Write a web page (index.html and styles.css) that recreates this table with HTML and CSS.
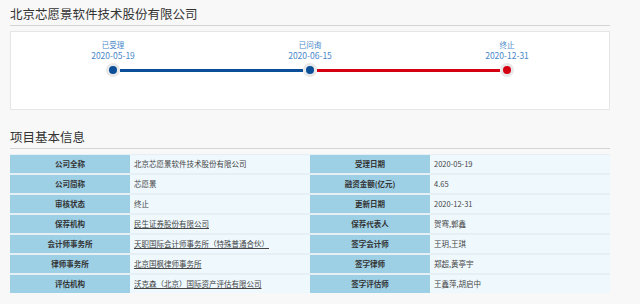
FILE: index.html
```html
<!DOCTYPE html>
<html lang="zh">
<head>
    <meta charset="UTF-8">
    <title>北京芯愿景软件技术股份有限公司</title>
    <link rel="stylesheet" href="styles.css">
</head>
<body>
    <div class="page">
        <!-- 公司名称 -->
        <h2 class="section-title">北京芯愿景软件技术股份有限公司</h2>

        <!-- 进度 -->
        <div class="progress-card">
            <div class="timeline">
                <div class="step">
                    <div class="step-name">已受理</div>
                    <div class="step-date">2020-05-19</div>
                </div>
                <div class="step">
                    <div class="step-name">已问询</div>
                    <div class="step-date">2020-06-15</div>
                </div>
                <div class="step">
                    <div class="step-name">终止</div>
                    <div class="step-date">2020-12-31</div>
                </div>
            </div>
            <div class="track">
                <span class="dot blue"></span>
                <span class="line blue"></span>
                <span class="dot blue"></span>
                <span class="line red"></span>
                <span class="dot red"></span>
            </div>
        </div>

        <!-- 项目基本信息 -->
        <h2 class="section-title second">项目基本信息</h2>
        <table class="info-table">
            <tr>
                <td class="label">公司全称</td>
                <td class="value">北京芯愿景软件技术股份有限公司</td>
                <td class="label">受理日期</td>
                <td class="value">2020-05-19</td>
            </tr>
            <tr>
                <td class="label">公司简称</td>
                <td class="value">芯愿景</td>
                <td class="label">融资金额(亿元)</td>
                <td class="value">4.65</td>
            </tr>
            <tr>
                <td class="label">审核状态</td>
                <td class="value">终止</td>
                <td class="label">更新日期</td>
                <td class="value">2020-12-31</td>
            </tr>
            <tr>
                <td class="label">保荐机构</td>
                <td class="value"><a href="#">民生证券股份有限公司</a></td>
                <td class="label">保荐代表人</td>
                <td class="value">贺骞,郭鑫</td>
            </tr>
            <tr>
                <td class="label">会计师事务所</td>
                <td class="value"><a href="#">天职国际会计师事务所（特殊普通合伙）</a></td>
                <td class="label">签字会计师</td>
                <td class="value">王玥,王琪</td>
            </tr>
            <tr>
                <td class="label">律师事务所</td>
                <td class="value"><a href="#">北京国枫律师事务所</a></td>
                <td class="label">签字律师</td>
                <td class="value">郑超,黄亭宇</td>
            </tr>
            <tr>
                <td class="label">评估机构</td>
                <td class="value"><a href="#">沃克森（北京）国际资产评估有限公司</a></td>
                <td class="label">签字评估师</td>
                <td class="value">王鑫萍,胡启中</td>
            </tr>
        </table>
    </div>
</body>
</html>
```

FILE: styles.css
```css
body {
    margin: 0;
    background-color: #f8f8f8;
    font-family: "Noto Sans CJK SC", "Noto Sans", sans-serif;
    color: #333;
}

.page {
    width: 600px;
    padding: 4px 30px 0 10px;
}

/* 标题 */
.section-title {
    margin: 0;
    font-size: 12.5px;
    font-weight: normal;
    line-height: 20px;
    color: #333;
    padding-bottom: 1px;
    border-bottom: 1px solid #d4d4d4;
}

.section-title.second {
    margin-top: 17px;
}

/* 进度卡片 */
.progress-card {
    margin-top: 5px;
    height: 77px;
    background-color: #fff;
    border: 1px solid #e6e6e6;
}

.timeline {
    display: flex;
    padding: 8px 0 0 42px;
}

.step {
    flex-shrink: 0;
    width: 120px;
    margin-right: 77px;
    text-align: center;
    color: #4a88c9;
    line-height: 10px;
}

.step-name {
    font-size: 7.5px;
}

.step-date {
    font-size: 8.5px;
}

.track {
    display: flex;
    align-items: center;
    margin: 3px 0 0 95px;
}

.dot {
    width: 8px;
    height: 8px;
    border-radius: 50%;
    border: 3px solid #e8e8e8;
    flex-shrink: 0;
}

.dot.blue {
    background-color: #0a4f98;
}

.dot.red {
    background-color: #d40011;
}

.line {
    width: 183px;
    height: 3px;
}

.line.blue {
    background-color: #0a4f98;
}

.line.red {
    background-color: #d40011;
}

/* 信息表 */
.info-table {
    margin-top: 5px;
    width: 600px;
    border-collapse: collapse;
    font-size: 7.5px;
    table-layout: fixed;
}

.info-table td {
    height: 18px;
    padding: 0;
    border-top: 2px solid #e6eff3;
    line-height: 18px;
}

.info-table tr:first-child td {
    border-top: 1px solid #e6eff3;
}

.info-table .label {
    width: 120px;
    background-color: #9dcfe5;
    text-align: center;
    font-weight: bold;
    color: #333;
}

.info-table .value {
    width: 164px;
    padding-left: 4px;
    padding-right: 12px;
    background-color: #eef8fd;
    color: #444;
    white-space: nowrap;
}

.info-table a {
    color: #444;
    text-decoration: underline;
}
```
